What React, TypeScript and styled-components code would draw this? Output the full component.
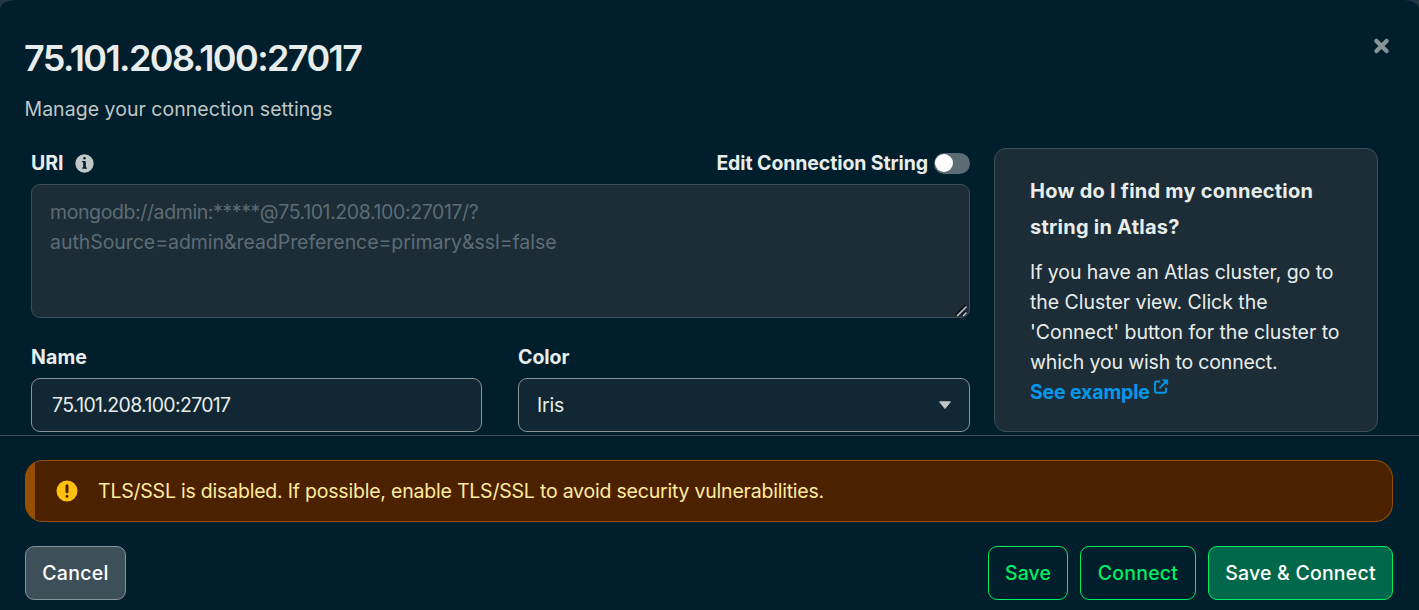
import React from "react";
import styled, { createGlobalStyle } from "styled-components";

const Global = createGlobalStyle`
  *, *::before, *::after { box-sizing: border-box; }
  html, body { margin: 0; height: 610px; overflow: hidden; background: #233743; }
  body, button, input { font-family: Inter, "Liberation Sans", sans-serif; }
`;

const Modal = styled.div`
  width: 1419px;
  height: 610px;
  display: flex;
  flex-direction: column;
  overflow: hidden;
  background: #001e2b;
  border-radius: 15px 15px 0 0 / 9px 9px 0 0;
  font-size: 19.5px;
  color: #e8edeb;
`;

const Header = styled.header`
  display: flex;
  justify-content: space-between;
  align-items: flex-start;
  height: 148px;
  flex: none;
  padding: 36px 28px 0 25px;
`;

const Title = styled.h1`
  margin: 0 0 0 -1px;
  font-size: 36px;
  font-weight: 600;
  line-height: 44px;
  white-space: nowrap;
  letter-spacing: -1.6px;
`;

const Subtitle = styled.p`
  margin: 14px 0 0 -0.5px;
  line-height: 30px;
  color: #c1c7c6;
  letter-spacing: 0.03px;
`;

const CloseButton = styled.button`
  display: flex;
  margin: -1px 0 0;
  padding: 0;
  border: 0;
  background: none;
  color: #889397;
`;

const Body = styled.main`
  display: flex;
  flex: none;
  height: 287px;
  padding: 0 41px 0 31px;
  gap: 24px;
`;

const Form = styled.form`
  width: 939px;
  display: flex;
  flex-direction: column;
`;

const LabelRow = styled.div`
  display: flex;
  align-items: center;
  height: 30px;
  margin-bottom: 6px;
`;

const Label = styled.label<{ $track?: number }>`
  display: block;
  font-weight: 700;
  line-height: 30px;
  white-space: nowrap;
  letter-spacing: ${(p) => p.$track ?? 0}px;
`;

const InfoIcon = styled.svg`
  margin-left: 10px;
  color: #c1c7c6;
`;

const ToggleGroup = styled.div`
  display: flex;
  align-items: center;
  gap: 6px;
  margin-left: auto;
`;

const Toggle = styled.span`
  display: flex;
  align-items: center;
  width: 36px;
  height: 21px;
  padding: 1px;
  border-radius: 11px;
  background: #5c6c75;
`;

const Knob = styled.span`
  width: 18px;
  height: 18px;
  border-radius: 50%;
  background: #fff;
`;

const UriInput = styled.div`
  position: relative;
  width: 939px;
  height: 134px;
  flex: none;
  padding: 12px 18px;
  border: 1px solid #3d4f58;
  border-radius: 9px;
  background: #1c2d38;
  color: #5c6c75;
  line-height: 30px;
`;

const Grip = styled.svg`
  position: absolute;
  right: 1px;
  bottom: 0;
`;

const FieldRow = styled.div`
  display: grid;
  grid-template-columns: 451px 452px;
  gap: 36px;
  margin-top: 24px;
`;

const Field = styled.div`
  display: flex;
  flex-direction: column;
  gap: 6px;
`;

const TextInput = styled.input`
  height: 54px;
  width: 100%;
  padding: 0 20px;
  border: 1px solid #889397;
  border-radius: 9px;
  background: #112733;
  color: #e8edeb;
  font-size: 19.5px;
  letter-spacing: -0.66px;
  outline: none;
`;

const Select = styled.div`
  display: flex;
  align-items: center;
  justify-content: space-between;
  height: 54px;
  padding: 0 17px 0 18px;
  border: 1px solid #889397;
  border-radius: 9px;
  background: #112733;
`;

const Card = styled.aside`
  width: 384px;
  height: 284px;
  padding: 24px 35px 0;
  border: 1px solid #3d4f58;
  border-radius: 12px;
  background: #1c2d38;
`;

const CardTitle = styled.h2`
  margin: 0 0 12px;
  font-size: 20px;
  line-height: 36px;
  font-weight: 700;
  white-space: nowrap;
`;

const Line = styled.span<{ $track?: number }>`
  display: block;
  white-space: nowrap;
  letter-spacing: ${(p) => p.$track ?? 0}px;
`;

const CardText = styled.p`
  margin: 0;
  line-height: 30px;
`;

const CardLink = styled.a`
  display: flex;
  gap: 4px;
  line-height: 30px;
  font-weight: 700;
  color: #0498ec;
`;

const LinkIcon = styled.svg`
  margin-top: 2px;
`;

const Footer = styled.footer`
  display: flex;
  flex-direction: column;
  gap: 24px;
  flex: 1;
  padding: 24px 26px 0 25px;
  border-top: 1px solid #3d4f58;
`;

const Banner = styled.div`
  display: flex;
  align-items: center;
  height: 62px;
  flex: none;
  padding-left: 30px;
  gap: 19px;
  border: 1px solid #944f01;
  border-left-width: 0;
  border-radius: 18px;
  background: linear-gradient(to right, #944f01 10px, #4c2100 10px) border-box;
  color: #ffec9e;
`;

const Actions = styled.div`
  display: flex;
  gap: 12px;
`;

const Button = styled.button<{ $kind: "gray" | "outline" | "primary"; $width: number; $track?: number }>`
  width: ${(p) => p.$width}px;
  height: 54px;
  padding: 0;
  border-radius: 9px;
  border: 1px solid ${(p) => (p.$kind === "gray" ? "#889397" : "#00ed64")};
  background: ${(p) => ({ gray: "#3d4f58", outline: "transparent", primary: "#00684a" })[p.$kind]};
  color: ${(p) => (p.$kind === "outline" ? "#00ed64" : "#fff")};
  font-size: 19.5px;
  font-weight: 500;
  white-space: nowrap;
  letter-spacing: ${(p) => p.$track ?? 0}px;
`;

const Spacer = styled.div`
  flex: 1;
`;

const circle = "M8 15A7 7 0 1 0 8 1A7 7 0 0 0 8 15Z";

export default function App() {
  return (
    <Modal>
      <Global />
      <Header>
        <div>
          <Title>75.101.208.100:27017</Title>
          <Subtitle>Manage your connection settings</Subtitle>
        </div>
        <CloseButton aria-label="Close">
          <svg width="19" height="22" viewBox="0 0 19 22">
            <path d="M4.4 5.9L14.6 16.1M14.6 5.9L4.4 16.1" stroke="currentColor" strokeWidth="4.3" strokeLinecap="round" />
          </svg>
        </CloseButton>
      </Header>
      <Body>
        <Form>
          <LabelRow>
            <Label>URI</Label>
            <InfoIcon width="21" height="21" viewBox="0 0 16 16">
              <path fill="currentColor" fillRule="evenodd" d={circle + "M9 4A1 1 0 1 1 7 4A1 1 0 0 1 9 4ZM8 6C8.55 6 9 6.45 9 7V11H9.5C9.78 11 10 11.22 10 11.5C10 11.78 9.78 12 9.5 12H6.5C6.22 12 6 11.78 6 11.5C6 11.22 6.22 11 6.5 11H7V7H6.5C6.22 7 6 6.78 6 6.5C6 6.22 6.22 6 6.5 6H8Z"} />
            </InfoIcon>
            <ToggleGroup>
              <Label $track={-0.1}>Edit Connection String</Label>
              <Toggle><Knob /></Toggle>
            </ToggleGroup>
          </LabelRow>
          <UriInput>
            <Line $track={-0.39}>mongodb://admin:*****@75.101.208.100:27017/?</Line>
            <Line $track={-0.05}>authSource=admin&amp;readPreference=primary&amp;ssl=false</Line>
            <Grip width="13" height="13" viewBox="0 0 13 13" fill="none">
              <path d="M1 11.5L11 1.5M7.5 11.5L11 8" stroke="#0b0f12" strokeWidth="3" />
              <path d="M2 12L11.5 2.5M8 12L11.5 8.5" stroke="#c9cdcf" strokeWidth="1.5" />
            </Grip>
          </UriInput>
          <FieldRow>
            <Field>
              <Label $track={0.1}>Name</Label>
              <TextInput readOnly value="75.101.208.100:27017" />
            </Field>
            <Field>
              <Label $track={-0.05}>Color</Label>
              <Select>
                <Line $track={-0.2}>Iris</Line>
                <svg width="14" height="10" viewBox="0 0 14 10">
                  <path d="M1.6 1.8H12.4L7 8.6Z" fill="#c1c7c6" stroke="#c1c7c6" strokeLinejoin="round" />
                </svg>
              </Select>
            </Field>
          </FieldRow>
        </Form>
        <Card>
          <CardTitle>
            <Line $track={0.24}>How do I find my connection</Line>
            <Line $track={0.24}>string in Atlas?</Line>
          </CardTitle>
          <CardText>
            <Line $track={-0.05}>If you have an Atlas cluster, go to</Line>
            <Line $track={-0.04}>the Cluster view. Click the</Line>
            <Line $track={-0.05}>'Connect' button for the cluster to</Line>
            <Line $track={-0.15}>which you wish to connect.</Line>
          </CardText>
          <CardLink>
            <Line $track={-0.15}>See example</Line>
            <LinkIcon width="15" height="15" viewBox="0 0 15 15" fill="none" stroke="currentColor" strokeWidth="1.9">
              <path d="M6 2.5H2.6Q1 2.5 1 4.1V12.1Q1 13.7 2.6 13.7H10.4Q12 13.7 12 12.1V8.8M5.5 9.2L11.5 3.2" />
              <path d="M8.4 0.7H13.8V6.1Z" fill="currentColor" strokeWidth="0.5" />
            </LinkIcon>
          </CardLink>
        </Card>
      </Body>
      <Footer>
        <Banner>
          <svg width="24" height="24" viewBox="0 0 16 16">
            <path fill="#ffc010" fillRule="evenodd" d={circle + "M7 4.5A1 1 0 0 1 9 4.5V8.5A1 1 0 0 1 7 8.5ZM9 11.5A1 1 0 1 1 7 11.5A1 1 0 0 1 9 11.5Z"} />
          </svg>
          <Line $track={-0.21}>TLS/SSL is disabled. If possible, enable TLS/SSL to avoid security vulnerabilities.</Line>
        </Banner>
        <Actions>
          <Button $kind="gray" $width={101} $track={0.3}>Cancel</Button>
          <Spacer />
          <Button $kind="outline" $width={80} $track={0.1}>Save</Button>
          <Button $kind="outline" $width={116} $track={0.2}>Connect</Button>
          <Button $kind="primary" $width={185} $track={0.2}>Save &amp; Connect</Button>
        </Actions>
      </Footer>
    </Modal>
  );
}
